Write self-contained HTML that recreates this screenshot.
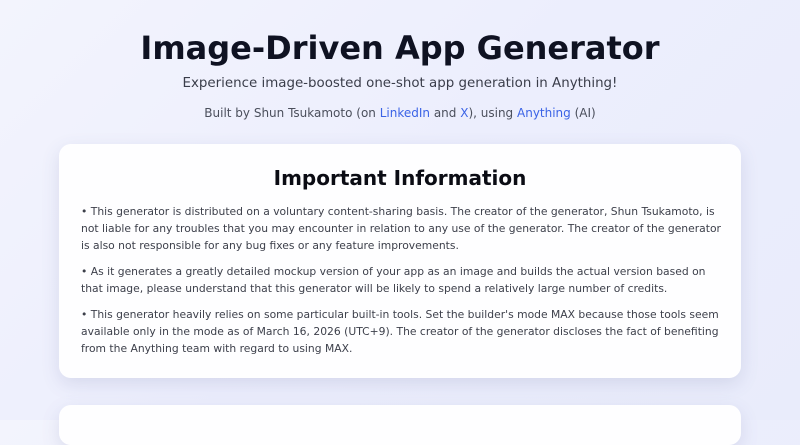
<!DOCTYPE html>
<html><head><meta charset="utf-8"><style>
html,body{margin:0;padding:0}
body{width:800px;height:420px;overflow:hidden;background:linear-gradient(135deg,#f3f4fd 0%,#eceefd 50%,#e9ecfb 100%);font-family:"DejaVu Sans","Liberation Sans",sans-serif;position:relative}
h1{position:absolute;top:29px;left:0;width:800px;margin:0;text-align:center;font-size:32px;font-weight:bold;color:#0f1222}
.sub{position:absolute;top:76px;left:0;width:800px;text-align:center;font-size:13.4px;color:#3a3d4a}
.by{position:absolute;top:106px;left:0;width:800px;text-align:center;font-size:12px;color:#4b4f5c}
.by a{color:#3b63e6;text-decoration:none}
.card{position:absolute;left:59px;width:682px;background:rgba(255,255,255,0.92);border-radius:12px;box-shadow:0 6px 18px rgba(80,90,140,0.15)}
.c1{top:144px;height:234px}
.c2{top:405px;height:40px}
h2{margin:0;position:absolute;top:22px;left:0;width:682px;text-align:center;font-size:20px;font-weight:bold;color:#0b0c14}
.body{position:absolute;top:59px;left:22px;width:642px;font-size:10.75px;line-height:17px;color:#3c3f4a}
.body p{margin:0 0 9px 0}
</style></head><body>
<h1>Image-Driven App Generator</h1>
<div class="sub">Experience image-boosted one-shot app generation in Anything!</div>
<div class="by">Built by Shun Tsukamoto (on <a>LinkedIn</a> and <a>X</a>), using <a>Anything</a> (AI)</div>
<div class="card c1">
<h2>Important Information</h2>
<div class="body">
<p>• This generator is distributed on a voluntary content-sharing basis. The creator of the generator, Shun Tsukamoto, is not liable for any troubles that you may encounter in relation to any use of the generator. The creator of the generator is also not responsible for any bug fixes or any feature improvements.</p>
<p>• As it generates a greatly detailed mockup version of your app as an image and builds the actual version based on that image, please understand that this generator will be likely to spend a relatively large number of credits.</p>
<p>• This generator heavily relies on some particular built-in tools. Set the builder's mode MAX because those tools seem available only in the mode as of March 16, 2026 (UTC+9). The creator of the generator discloses the fact of benefiting from the Anything team with regard to using MAX.</p>
</div>
</div>
<div class="card c2"></div>
</body></html>
